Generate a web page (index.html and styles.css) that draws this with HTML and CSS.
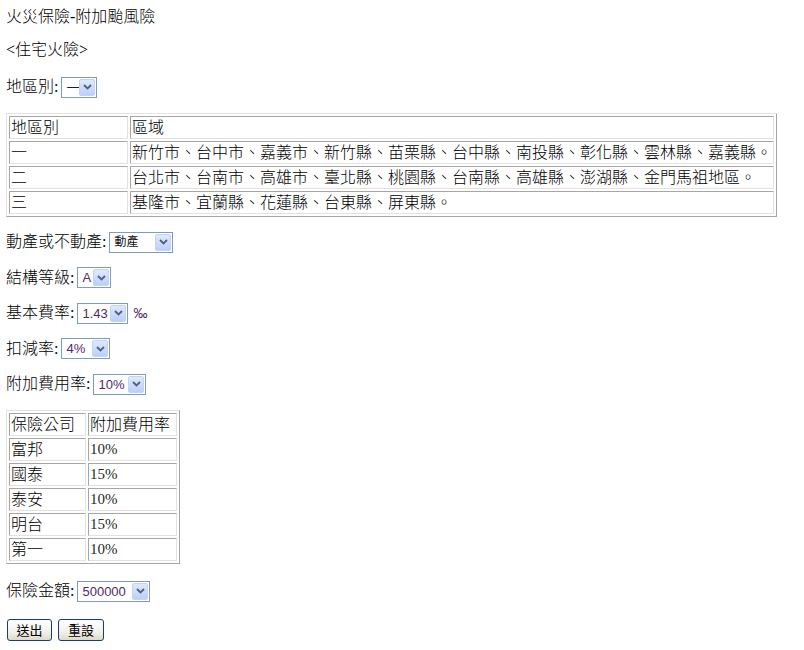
FILE: index.html
```html
<!DOCTYPE html>
<html lang="zh-Hant">
<head>
<meta charset="utf-8">
<title>火災保險-附加颱風險</title>
<link rel="stylesheet" href="styles.css">
</head>
<body>
<div class="title">火災保險-附加颱風險</div>
<div class="sub">&lt;住宅火險&gt;</div>

<div class="line l1">地區別:<span class="sel w36"><span class="val cjk">一</span><span class="btn"><svg width="9" height="6" viewBox="0 0 9 6"><path d="M1 1 L4.5 4.5 L8 1" fill="none" stroke="#4d6185" stroke-width="1.8"/></svg></span></span></div>

<table class="grid area">
  <tr><td class="c1">地區別</td><td>區域</td></tr>
  <tr><td class="c1">一</td><td>新竹市、台中市、嘉義市、新竹縣、苗栗縣、台中縣、南投縣、彰化縣、雲林縣、嘉義縣。</td></tr>
  <tr><td class="c1">二</td><td>台北市、台南市、高雄市、臺北縣、桃園縣、台南縣、高雄縣、澎湖縣、金門馬祖地區。</td></tr>
  <tr><td class="c1">三</td><td>基隆市、宜蘭縣、花蓮縣、台東縣、屏東縣。</td></tr>
</table>

<div class="line l2">動產或不動產:<span class="sel w64"><span class="val cjk small">動產</span><span class="btn"><svg width="9" height="6" viewBox="0 0 9 6"><path d="M1 1 L4.5 4.5 L8 1" fill="none" stroke="#4d6185" stroke-width="1.8"/></svg></span></span></div>

<div class="line">結構等級:<span class="sel w34"><span class="val">A</span><span class="btn"><svg width="9" height="6" viewBox="0 0 9 6"><path d="M1 1 L4.5 4.5 L8 1" fill="none" stroke="#4d6185" stroke-width="1.8"/></svg></span></span></div>

<div class="line">基本費率:<span class="sel w51"><span class="val">1.43</span><span class="btn"><svg width="9" height="6" viewBox="0 0 9 6"><path d="M1 1 L4.5 4.5 L8 1" fill="none" stroke="#4d6185" stroke-width="1.8"/></svg></span></span><span class="permil">‰</span></div>

<div class="line">扣減率:<span class="sel w49"><span class="val">4%</span><span class="btn"><svg width="9" height="6" viewBox="0 0 9 6"><path d="M1 1 L4.5 4.5 L8 1" fill="none" stroke="#4d6185" stroke-width="1.8"/></svg></span></span></div>

<div class="line">附加費用率:<span class="sel w53"><span class="val">10%</span><span class="btn"><svg width="9" height="6" viewBox="0 0 9 6"><path d="M1 1 L4.5 4.5 L8 1" fill="none" stroke="#4d6185" stroke-width="1.8"/></svg></span></span></div>

<table class="grid rate">
  <tr><td class="r1">保險公司</td><td class="r2">附加費用率</td></tr>
  <tr><td class="r1">富邦</td><td class="r2 num">10%</td></tr>
  <tr><td class="r1">國泰</td><td class="r2 num">15%</td></tr>
  <tr><td class="r1">泰安</td><td class="r2 num">10%</td></tr>
  <tr><td class="r1">明台</td><td class="r2 num">15%</td></tr>
  <tr><td class="r1">第一</td><td class="r2 num">10%</td></tr>
</table>

<div class="line l3">保險金額:<span class="sel w73"><span class="val">500000</span><span class="btn"><svg width="9" height="6" viewBox="0 0 9 6"><path d="M1 1 L4.5 4.5 L8 1" fill="none" stroke="#4d6185" stroke-width="1.8"/></svg></span></span></div>

<div class="buttons">
  <button class="xpbtn b1" type="button">送出</button>
  <button class="xpbtn b2" type="button">重設</button>
</div>
</body>
</html>
```

FILE: styles.css
```css
html, body {
  background: #fff;
}
body {
  margin: 0;
  padding: 7px 6px 0 6px;
  font-family: "Liberation Serif", "Noto Sans CJK TC", serif;
  font-size: 16px;
  font-weight: 300;
  color: #000;
}
.title {
  line-height: 20px;
  height: 20px;
}
.sub {
  margin-top: 13px;
  line-height: 20px;
  height: 20px;
}
.line {
  display: flex;
  align-items: center;
  height: 22px;
  line-height: 22px;
  margin-top: 13.5px;
  white-space: nowrap;
}
.line.l1 { margin-top: 16px; }
.line.l2 { margin-top: 14px; }
.line.l3 { margin-top: 16px; }

.sel {
  display: inline-flex;
  align-items: center;
  box-sizing: border-box;
  height: 21px;
  margin-left: 3px;
  border: 1px solid #7f9db9;
  background: #fff;
  padding: 1px;
  font-family: "Liberation Sans", "Noto Sans CJK TC", sans-serif;
  font-size: 13px;
  font-weight: 400;
  color: #4b2a6b;
}
.sel .val {
  flex: 1;
  padding-left: 3px;
  line-height: 17px;
}
.sel .val.cjk {
  color: #1a1a3a;
  font-size: 13px;
}
.sel .val.small {
  font-size: 12px;
  color: #111;
}
.sel .btn {
  box-sizing: border-box;
  width: 16px;
  height: 17px;
  display: flex;
  align-items: center;
  justify-content: center;
  background: linear-gradient(#e0e9fd, #bccff8);
  border: 1px solid #c3d3f7;
  border-radius: 2px;
}
.w34 { width: 34px; }
.w36 { width: 36px; }
.w49 { width: 49px; }
.w51 { width: 51px; }
.w53 { width: 53px; }
.w64 { width: 64px; }
.w73 { width: 73px; }

.permil {
  margin-left: 5px;
  font-family: "Liberation Sans", sans-serif;
  font-size: 14px;
  font-weight: 400;
  color: #4b2a6b;
}

.grid {
  border-collapse: separate;
  border-spacing: 2px;
  border: 1px solid;
  border-color: #e3e2e0 #a6a6a6 #a6a6a6 #e3e2e0;
  margin-top: 15px;
}
.grid td {
  border: 1px solid;
  border-color: #a6a6a6 #e3e2e0 #e3e2e0 #a6a6a6;
  padding: 1px;
  height: 19px;
  line-height: 19px;
  white-space: nowrap;
  vertical-align: middle;
}
.area .c1 { width: 115px; }
.rate { margin-top: 15px; }
.rate .r1 { width: 73px; }
.rate .r2 { width: 85px; }
.rate .num { font-size: 15px; font-weight: 400; color: #1e2a1e; }

.buttons {
  display: flex;
  gap: 6px;
  margin-top: 17px;
  padding-left: 1px;
}
.xpbtn {
  box-sizing: border-box;
  height: 22px;
  padding: 0;
  border: 1px solid #1c3c6c;
  border-radius: 3px;
  background: linear-gradient(#ffffff, #f2f1ea 60%, #dcd9cc);
  font-family: "Noto Sans CJK TC", sans-serif;
  font-size: 13px;
  font-weight: 400;
  line-height: 18px;
  color: #000;
}
.b1 { width: 45px; }
.b2 { width: 46px; }
```
